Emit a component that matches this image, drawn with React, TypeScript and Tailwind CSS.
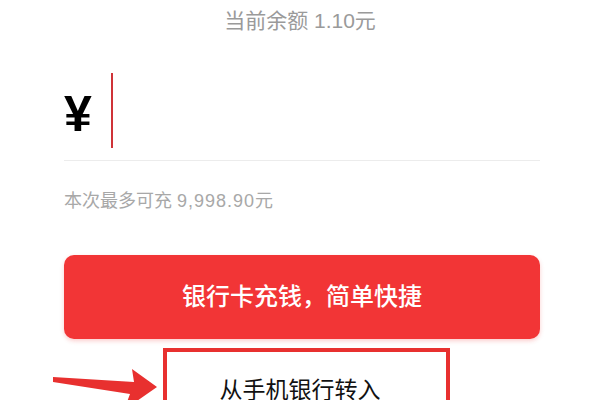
const font = "font-['Liberation_Sans','Noto_Sans_CJK_SC',sans-serif]";

const Arrow = () => (
  <svg
    className="absolute left-[-14px] top-[17px]"
    width="110"
    height="45"
    viewBox="0 0 110 45"
  >
    <polygon
      points="3,12 84,17 82,4 107,22 74,45 80,29 3,17"
      fill="#e8302f"
    />
  </svg>
);

export default function App() {
  return (
    <div className={`w-[600px] h-[400px] overflow-hidden bg-white ${font}`}>
      <div className="pt-[8px] text-center text-[21px] leading-[25px] text-[#9a9a9a]">
        当前余额 1.10元
      </div>

      <div className="pl-[64px] pr-[60px]">
        <div className="mt-[40px] flex items-center border-b border-[#ececec] pb-[12px]">
          <span className="mt-[6px] text-[50px] font-bold leading-[50px] text-black">
            ¥
          </span>
          <span className="ml-[19px] block h-[75px] w-[2px] bg-[#cf3338]" />
        </div>

        <div className="mt-[28px] text-[18px] leading-[24px] text-[#a8a8a8]">
          本次最多可充 <span className="tracking-[1px]">9,998.90</span>元
        </div>

        <button className="mt-[42px] flex h-[84px] w-full items-center justify-center rounded-[10px] bg-[#f23536] text-[24px] font-medium text-white shadow-[0_2px_4px_rgba(240,60,60,0.25)]">
          银行卡充钱，简单快捷
        </button>

        <div className="relative mt-[9px]">
          <div className="flex h-[84px] w-full items-center justify-center pr-[4px] text-[23px] text-[#111]">
            从手机银行转入
          </div>
          <div className="absolute left-[99px] top-0 h-[90px] w-[287px] border-4 border-[#e8302f]" />
          <Arrow />
        </div>
      </div>
    </div>
  );
}
